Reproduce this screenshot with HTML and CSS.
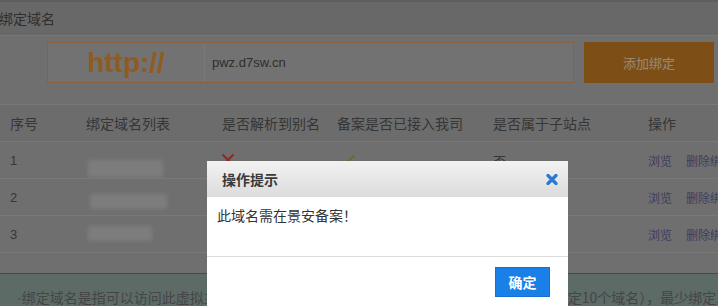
FILE: index.html
```html
<!DOCTYPE html>
<html lang="zh-CN">
<head>
<meta charset="utf-8">
<title>绑定域名</title>
<link rel="stylesheet" href="styles.css">
</head>
<body>
<div class="page">
  <div class="title-bar">绑定域名</div>
  <div class="bind-row">
    <div class="url-field">
      <span class="proto">http://</span>
      <span class="url-input">pwz.d7sw.cn</span>
    </div>
    <button class="add-btn">添加绑定</button>
  </div>
  <div class="table">
    <div class="row head">
      <span>序号</span><span>绑定域名列表</span><span>是否解析到别名</span><span>备案是否已接入我司</span><span>是否属于子站点</span><span>操作</span>
    </div>
    <div class="row">
      <span class="num">1</span>
      <span><i class="smudge s1"></i></span>
      <span class="icon-cell"><svg class="cross" width="14" height="14" viewBox="0 0 14 14"><path d="M1.5 1.5 L12.5 12.5 M12.5 1.5 L1.5 12.5" stroke="#e94343" stroke-width="2" fill="none"/></svg></span>
      <span class="icon-cell check-cell"><svg class="check" width="16" height="12" viewBox="0 0 16 12"><path d="M1.5 6.5 L6 10.5 L15 1.5" stroke="#a7b743" stroke-width="2" fill="none"/></svg></span>
      <span>否</span>
      <span class="ops"><a>浏览</a><a>删除绑定</a></span>
    </div>
    <div class="row">
      <span class="num">2</span>
      <span><i class="smudge s2"></i></span>
      <span></span><span></span><span></span>
      <span class="ops"><a>浏览</a><a>删除绑定</a></span>
    </div>
    <div class="row">
      <span class="num">3</span>
      <span><i class="smudge s3"></i></span>
      <span></span><span></span><span></span>
      <span class="ops"><a>浏览</a><a>删除绑定</a></span>
    </div>
  </div>
  <div class="tips"><span class="dot">·</span>绑定域名是指可以访问此虚拟主机的域名，不同的主机型号绑定数量不同（如经济型可绑定10个域名），最少绑定1个域名。</div>
</div>
<div class="mask"></div>
<div class="dialog">
  <div class="dlg-head">
    <span class="dlg-title">操作提示</span>
    <svg class="close" width="12" height="11" viewBox="0 0 12 11"><path d="M2 1.5 L10 9.5 M10 1.5 L2 9.5" stroke="#2a78d4" stroke-width="3.2" stroke-linecap="round" fill="none"/></svg>
  </div>
  <div class="dlg-body">此域名需在景安备案！</div>
  <div class="dlg-foot"><button class="ok-btn">确定</button></div>
</div>
</body>
</html>
```
FILE: styles.css
```css
* { box-sizing: border-box; margin: 0; padding: 0; }
html, body { width: 718px; height: 306px; overflow: hidden; }
body {
  font-family: "Noto Sans CJK SC", "Liberation Sans", sans-serif;
  background: #b9b9b9;
  color: #5f5f5f;
  position: relative;
}
.page { width: 780px; }

.title-bar {
  height: 36px;
  border-top: 2px solid #9d9d9d;
  border-bottom: 1px solid #c8c8c8;
  background: #adadad;
  font-size: 14px;
  line-height: 33px;
  color: #4f4f4f;
  margin-left: -1px;
}

.bind-row {
  display: flex;
  gap: 10px;
  padding: 6px 0 21px 47px;
  border-bottom: 1px solid #c8c8c8;
}
.url-field {
  display: flex;
  width: 527px;
  height: 41px;
  border: 1px solid #e6a06b;
  background: #bebebe;
}
.proto {
  width: 157px;
  border-right: 1px solid #cccccc;
  display: flex;
  align-items: center;
  justify-content: center;
  font: bold 28px "Liberation Sans", sans-serif;
  color: #f09832;
}
.url-input {
  padding-left: 7px;
  display: flex;
  align-items: center;
  font: 13px "Liberation Sans", sans-serif;
  color: #4d4d4d;
}
.add-btn {
  width: 130px;
  height: 41px;
  border: 0;
  background: #d08326;
  color: #f8e4c6;
  font-size: 13px;
  font-family: inherit;
}

.row {
  display: grid;
  grid-template-columns: 76px 136px 115px 156px 155px 1fr;
  height: 37px;
  border-bottom: 1px solid #cacaca;
  align-items: center;
  font-size: 13px;
  color: #5a5a5a;
}
.row > span { padding-left: 10px; }
.num { font-family: "Liberation Sans", sans-serif; }
.head { background: #b4b4b4; font-size: 14px; }
.icon-cell { display: flex; align-items: center; padding-left: 9px !important; }
.check-cell { padding-left: 12px !important; }
.smudge {
  display: block;
  background: #d0d0d0;
  filter: blur(2px);
  height: 17px;
}
.s1 { width: 75px; margin: 16px 0 0 2px; }
.s2 { width: 77px; margin: 8px 0 0 4px; height: 15px; }
.s3 { width: 64px; margin: -2px 0 0 2px; height: 15px; }
.ops { font-size: 12px; white-space: nowrap; }
.ops a { color: #6868a0; margin-right: 14px; }

.tips {
  margin-top: 20px;
  border-top: 1px solid #64857d;
  background: #99b2aa;
  padding: 13px 0 10px 17px;
  font-size: 14px;
  line-height: 20px;
  color: #737373;
  white-space: nowrap;
  height: 60px;
}
.dot { font-family: "Liberation Sans", sans-serif; }

.mask {
  position: fixed;
  inset: 0;
  background: rgba(0, 0, 0, 0.4);
}
.dialog {
  position: absolute;
  left: 207px;
  top: 161px;
  width: 361px;
  background: #fff;
}
.dlg-head {
  height: 36px;
  background: linear-gradient(#f2f2f2, #dcdcdc);
  display: flex;
  align-items: center;
  justify-content: space-between;
  padding: 0 10px 0 15px;
  font-size: 14px;
  color: #333;
}
.dlg-title { font-weight: bold; color: #3a3a3a; }
.dlg-body {
  height: 59px;
  padding: 8px 10px;
  font-size: 14px;
  line-height: 20px;
  color: #333;
}
.dlg-foot {
  border-top: 1px solid #dcdcdc;
  padding: 10px 18px 12px;
  display: flex;
  justify-content: flex-end;
}
.ok-btn {
  width: 55px;
  height: 30px;
  background: #1a80e8;
  border: 1px solid #1570d0;
  color: #fff;
  font-weight: bold;
  font-size: 14px;
  font-family: inherit;
}
```
